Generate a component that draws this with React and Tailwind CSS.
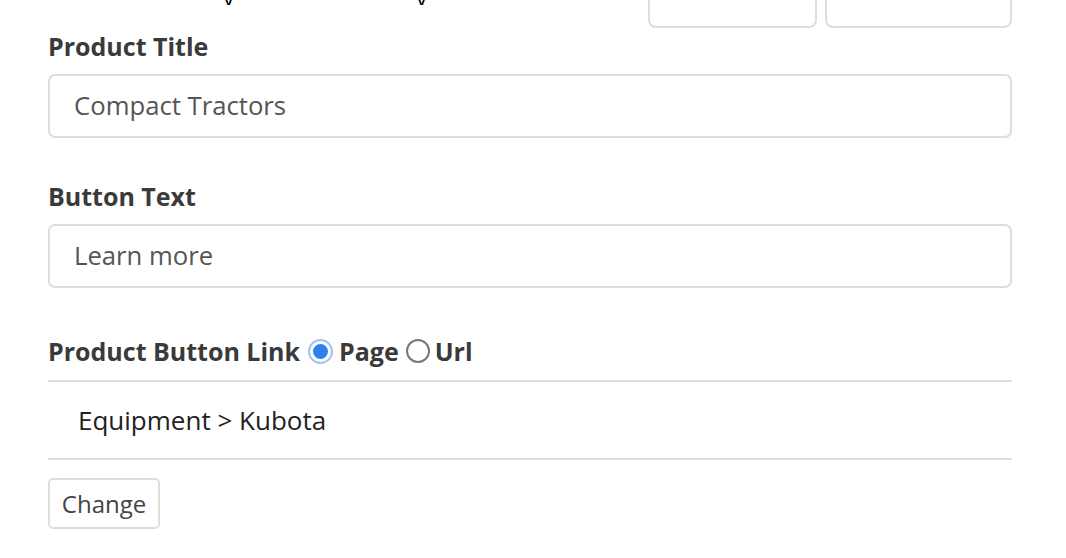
import React from "react";

const font = { fontFamily: '"Open Sans", "Liberation Sans", sans-serif' };

export default function App() {
  return (
    <div className="w-[1066px] h-[558px] bg-white overflow-hidden text-[#333]" style={font}>
      <div className="flex items-start h-[28px]">
        {/* cut-off line above */}
        <div className="h-[5px] overflow-hidden flex text-[22px] leading-[22px] text-black">
          <span className="ml-[223px] -mt-[14px]">y</span>
          <span className="ml-[182px] -mt-[14px]">y</span>
        </div>
        <div className="ml-auto mr-[54px] flex gap-[8px]">
          <div className="w-[169px] h-[28px] border-2 border-t-0 border-[#ddd] rounded-b-[8px]" />
          <div className="w-[187px] h-[28px] border-2 border-t-0 border-[#ddd] rounded-b-[8px]" />
        </div>
      </div>

      <div className="pl-[48px] pr-[54px]">
        <label className="block mt-[3px] text-[25px] leading-[30px] font-bold text-[#3a3a3a]">Product Title</label>
        <div className="mt-[13px] h-[64px] border-2 border-[#ddd] rounded-[7px] flex items-center pl-[24px] text-[25.7px] text-[#555]">
          Compact Tractors
        </div>

        <label className="block mt-[43px] text-[25px] leading-[30px] font-bold text-[#3a3a3a]">Button Text</label>
        <div className="mt-[13px] h-[64px] border-2 border-[#ddd] rounded-[7px] flex items-center pl-[24px] text-[25.7px] text-[#555]">
          Learn more
        </div>

        <div className="mt-[48px] flex items-center text-[25px] leading-[30px] font-bold text-[#3a3a3a]">
          <span>Product Button Link</span>
          <span className="ml-[8px] w-[25px] h-[25px] rounded-full bg-[#9cc3f7] flex items-center justify-center">
            <span className="w-[21px] h-[21px] rounded-full border-[3px] border-white bg-[#2f80ed]" />
          </span>
          <span className="ml-[6px]">Page</span>
          <span className="ml-[7px] w-[24px] h-[24px] rounded-full border-2 border-[#777] bg-white" />
          <span className="ml-[5px]">Url</span>
        </div>

        <div className="mt-[14px] border-t-2 border-[#ddd]" />
        <div className="h-[76px] flex items-center pl-[30px] text-[26px] text-[#222]">
          Equipment &gt; Kubota
        </div>
        <div className="border-t-2 border-[#ddd]" />

        <button className="mt-[18px] w-[112px] h-[51px] border-2 border-[#ddd] rounded-[5px] text-[24px] text-[#444] bg-white" style={font}>
          Change
        </button>
      </div>
    </div>
  );
}
